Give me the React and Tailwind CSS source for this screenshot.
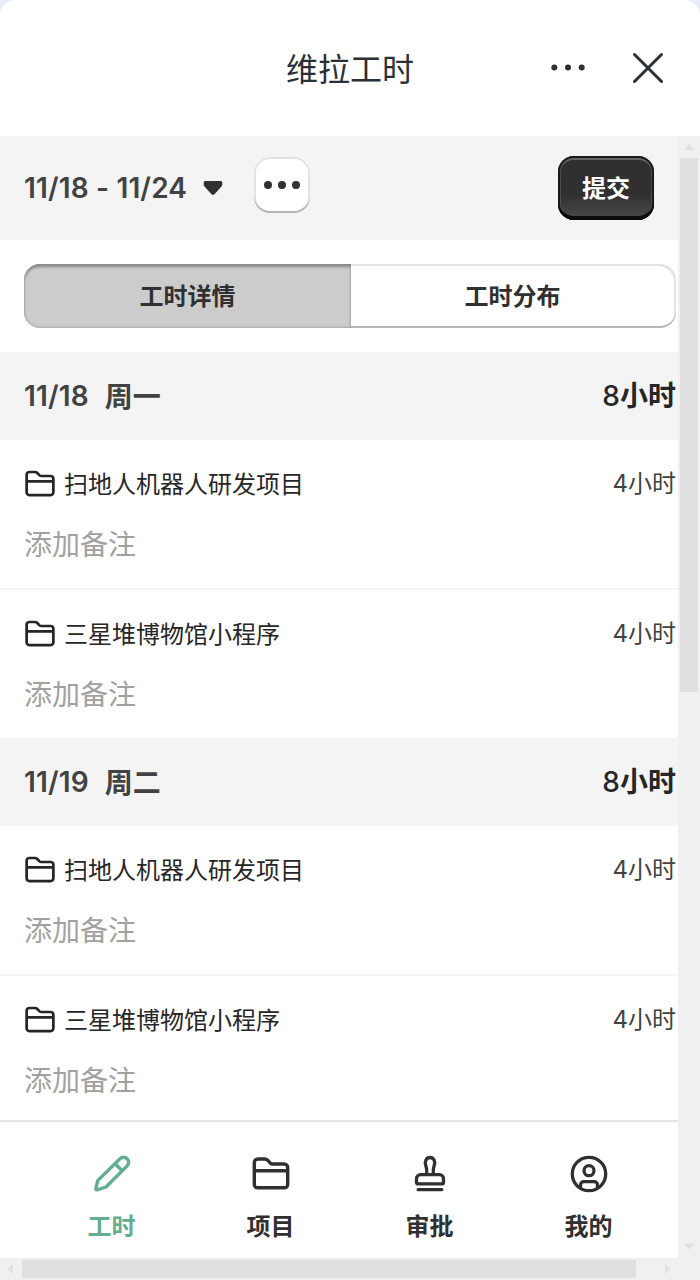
import React from 'react';

const days = [
    { date: '11/18', weekday: '周一', total: 8 },
    { date: '11/19', weekday: '周二', total: 8 },
];

const projects = [
    { name: '扫地人机器人研发项目', hours: 4 },
    { name: '三星堆博物馆小程序', hours: 4 },
];

const FolderIcon = ({ className }) => (
    <svg viewBox="0 0 40 40" fill="none" stroke="currentColor" strokeWidth="3.4" strokeLinejoin="round" className={className}>
        <path d="M3.3 31V8.500a3.500 3.500 0 0 1 3.500-3.500h6.900a4 4 0 0 1 2.900 1.200l2.500 2.700a4 4 0 0 0 2.900 1.100H33.200a3.500 3.500 0 0 1 3.500 3.500v17a3.300 3.300 0 0 1-3.500 3.300H6.800a3.300 3.300 0 0 1-3.500-3.300ZM3.300 16.700h33.400" />
    </svg>
);

const PencilIcon = () => (
    <svg viewBox="0 0 40 40" fill="none" stroke="currentColor" strokeWidth="3.4" strokeLinecap="round" strokeLinejoin="round" className="size-10">
        <path d="M28 4.800a4.900 4.900 0 0 1 7.100 0a4.900 4.900 0 0 1 0 7.100L14 33l-9 2.800c-.8.200-1.300-.3-1.200-1l1.900-8.200ZM23.200 9.700l7 7" />
    </svg>
);

const StampIcon = () => (
    <svg viewBox="0 0 40 40" fill="none" stroke="currentColor" strokeWidth="3.3" strokeLinecap="round" strokeLinejoin="round" className="size-10">
        <path d="M16.800 20.500c.2-4 0-6-.9-8.600C14.300 7.400 16.200 3.500 20 3.500s5.700 3.900 4.100 8.400c-.9 2.600-1.100 4.600-.9 8.600M10.500 20.700h19a4 4 0 0 1 4 4v3.500a1.700 1.700 0 0 1-1.700 1.700H8.200a1.700 1.700 0 0 1-1.700-1.700v-3.500a4 4 0 0 1 4-4ZM8.200 35.700h23.600" />
    </svg>
);

const UserIcon = () => (
    <svg viewBox="0 0 40 40" fill="none" stroke="currentColor" strokeWidth="3.3" strokeLinecap="round" strokeLinejoin="round" className="size-10">
        <circle cx="20" cy="20" r="16.700" />
        <circle cx="20" cy="16.700" r="5" />
        <path d="M11.500 33.500v-2.500a3.300 3.300 0 0 1 3.300-3.300h10.400a3.300 3.300 0 0 1 3.300 3.300v2.500" />
    </svg>
);

const tabs = [
    { label: '工时', icon: <PencilIcon />, active: true },
    { label: '项目', icon: <FolderIcon className="size-10" /> },
    { label: '审批', icon: <StampIcon /> },
    { label: '我的', icon: <UserIcon /> },
];

const Header = () => (
    <header className="grid h-[136px] shrink-0 grid-cols-[1fr_auto_1fr] items-center rounded-t-2xl bg-white text-[#2b2f36]">
        <span />
        <h1 className="pt-1 text-[32px] leading-[44px] font-normal">维拉工时</h1>
        <div className="flex items-center justify-end gap-[42px] pr-8">
            <svg viewBox="0 0 36 8" fill="currentColor" className="h-2 w-9">
                <circle cx="4.300" cy="3.600" r="3" />
                <circle cx="18" cy="3.600" r="3" />
                <circle cx="31.700" cy="3.600" r="3" />
            </svg>
            <svg viewBox="0 0 40 40" fill="none" stroke="currentColor" strokeWidth="3" strokeLinecap="round" className="size-10">
                <path d="m6.500 6.500 27 27m0-27-27 27" />
            </svg>
        </div>
    </header>
);

const Toolbar = () => (
    <div className="flex h-[104px] shrink-0 items-center bg-[#f4f4f4] px-6">
        <span className="text-[28px] font-semibold tracking-[0.15px] text-[#424242]">11/18 - 11/24</span>
        <svg viewBox="0 0 20 16" className="ml-4 h-4 w-5" fill="#303030">
            <path d="M2.200 1h15.600A1.500 1.500 0 0 1 19.300 2.500v2a3 3 0 0 1-.9 2.100L12 13.800a2.700 2.700 0 0 1-4 0L1.600 6.600A3 3 0 0 1 .7 4.500v-2A1.500 1.500 0 0 1 2.200 1Z" />
        </svg>
        <button className="mb-1.5 ml-[31px] flex size-14 items-center justify-center rounded-2xl bg-white shadow-[inset_0_-2px_0_#b5b5b5,inset_0_0_0_2px_#e3e3e3]">
            <svg viewBox="0 0 36 8" fill="#303030" className="h-2 w-9 shrink-0">
                <circle cx="4" cy="4" r="4" />
                <circle cx="18" cy="4" r="4" />
                <circle cx="32" cy="4" r="4" />
            </svg>
        </button>
        <button className="ml-auto h-16 w-24 rounded-2xl bg-gradient-to-b from-[#303030] from-60% to-[#4c4c4c] pt-0.5 text-2xl font-bold text-white shadow-[inset_0_-4px_0_#0c0c0c,inset_0_0_0_2px_#1a1a1a,inset_0_4px_0_#666,inset_0_0_0_3px_#4d4d4d]">
            提交
        </button>
    </div>
);

const Segmented = () => (
    <div className="h-[112px] shrink-0 py-6 pl-6 pr-0.5">
        <div className="flex h-16 text-2xl font-semibold text-[#303030]">
            <button className="w-[327px] rounded-l-2xl bg-[#ccc] pt-0.5 shadow-[inset_0_4px_3px_-1px_#888,inset_0_0_3px_#888]">工时详情</button>
            <button className="flex-1 rounded-r-2xl bg-white pt-0.5 pr-0.5 shadow-[inset_0_-2px_0_#b5b5b5,inset_-2px_2px_0_#e3e3e3]">工时分布</button>
        </div>
    </div>
);

const ProjectRow = ({ name, hours }) => (
    <div className="border-b-2 border-[#f4f4f4] py-6 pl-6 pr-0.5 last:border-b-0">
        <div className="flex h-10 items-center text-2xl text-[#262626]">
            <FolderIcon className="mr-2 size-8" />
            <span className="pt-px">{name}</span>
            <span className="ml-auto text-[#424242]">{hours}小时</span>
        </div>
        <div className="mt-[21px] h-[39px] text-[28px] leading-10 text-[#a1a1a1]">添加备注</div>
    </div>
);

const DaySection = ({ date, weekday, total }) => (
    <section className="shrink-0">
        <div className="flex h-[88px] items-center bg-[#f4f4f4] pl-6 pr-0.5 text-[28px] font-semibold text-[#424242]">
            <span className="tracking-[0.15px]">{date}</span>
            <span className="mt-0.5 ml-4">{weekday}</span>
            <span className="ml-auto text-[#262626]"><span className="font-medium">{total}</span>小时</span>
        </div>
        <div>
            {projects.map((p) => <ProjectRow key={p.name} {...p} />)}
        </div>
    </section>
);

const TabBar = () => (
    <nav className="flex h-[138px] shrink-0 border-t-2 border-[#e5e5e9] bg-white pl-8 pr-2.5 pt-8">
        {tabs.map((t) => (
            <div key={t.label} className={`flex flex-1 flex-col items-center ${t.active ? 'text-[#63ad91]' : 'text-[#303030]'}`}>
                {t.icon}
                <span className="mt-[15px] text-2xl leading-9 font-semibold">{t.label}</span>
            </div>
        ))}
    </nav>
);

const VerticalScrollbar = () => (
    <div className="flex w-[22px] flex-col items-center bg-[#f0f0f0]">
        <svg viewBox="0 0 22 22" className="size-[22px]" fill="#e0e0e0"><path d="M6 14h10l-5-5.500Z" /></svg>
        <div className="h-[534px] w-[18px] bg-[#e0e0e0]" />
        <svg viewBox="0 0 22 22" className="mt-auto size-[22px]" fill="#e0e0e0"><path d="M6 8h10l-5 5.500Z" /></svg>
    </div>
);

const HorizontalScrollbar = () => (
    <div className="flex h-[22px] items-center bg-[#f0f0f0] pr-[22px]">
        <svg viewBox="0 0 22 22" className="size-[22px]" fill="#e0e0e0"><path d="M13 6v10l-5.500-5Z" /></svg>
        <div className="h-[18px] w-[614px] bg-[#e0e0e0]" />
        <svg viewBox="0 0 22 22" className="ml-auto size-[22px]" fill="#e0e0e0"><path d="M9 6v10l5.500-5Z" /></svg>
    </div>
);

const App = () => (
    <div className="flex h-[1280px] w-[700px] flex-col overflow-hidden bg-[#e8ecfb] font-[Inter,'Noto_Sans_CJK_SC',sans-serif]">
        <Header />
        <div className="flex h-[1122px] bg-white">
            <main className="flex w-[678px] flex-col">
                <div className="flex min-h-0 flex-1 flex-col overflow-hidden">
                    <Toolbar />
                    <Segmented />
                    {days.map((d) => <DaySection key={d.date} {...d} />)}
                </div>
                <TabBar />
            </main>
            <VerticalScrollbar />
        </div>
        <HorizontalScrollbar />
    </div>
);

export default App;
